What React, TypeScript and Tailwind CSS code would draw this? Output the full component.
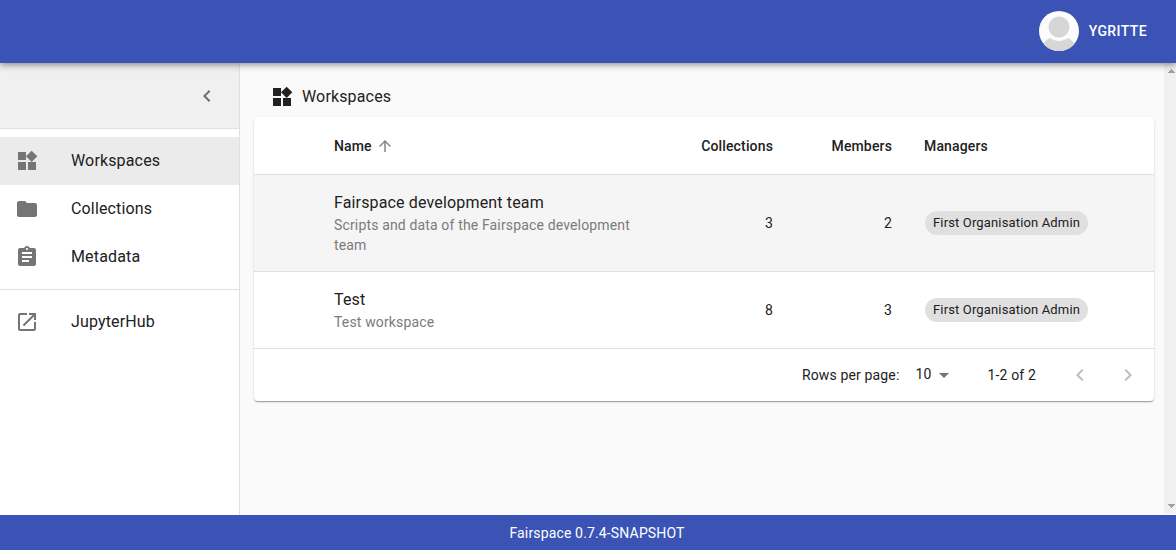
import React from 'react';

const ICONS = {
  widgets: 'M13 13v8h8v-8h-8zM3 21h8v-8H3v8zM3 3v8h8V3H3zm13.66-1.31L11 7.34 16.66 13l5.66-5.66-5.66-5.65z',
  folder: 'M10 4H4c-1.1 0-1.99.9-1.99 2L2 18c0 1.1.9 2 2 2h16c1.1 0 2-.9 2-2V8c0-1.1-.9-2-2-2h-8l-2-2z',
  assignment:
    'M19 3h-4.18C14.4 1.84 13.3 1 12 1c-1.3 0-2.4.84-2.82 2H5c-1.1 0-2 .9-2 2v14c0 1.1.9 2 2 2h14c1.1 0 2-.9 2-2V5c0-1.1-.9-2-2-2zm-7 0c.55 0 1 .45 1 1s-.45 1-1 1-1-.45-1-1 .45-1 1-1zm2 14H7v-2h7v2zm3-4H7v-2h10v2zm0-4H7V7h10v2z',
  openInNew:
    'M19 19H5V5h7V3H5c-1.11 0-2 .9-2 2v14c0 1.1.89 2 2 2h14c1.1 0 2-.9 2-2v-7h-2v7zM14 3v2h3.59l-9.83 9.83 1.41 1.41L19 6.41V10h2V3h-7z',
  left: 'M15.41 7.41L14 6l-6 6 6 6 1.41-1.41L10.83 12z',
  right: 'M10 6L8.59 7.41 13.17 12l-4.58 4.59L10 18l6-6z',
  arrowUp: 'M4 12l1.41 1.41L11 7.83V20h2V7.83l5.58 5.59L20 12l-8-8-8 8z',
  dropDown: 'M7 10l5 5 5-5z',
};

function Icon({ name, className = '' }: { name: keyof typeof ICONS; className?: string }) {
  return (
    <svg viewBox="0 0 24 24" fill="currentColor" className={`shrink-0 ${className}`} aria-hidden="true">
      <path d={ICONS[name]} />
    </svg>
  );
}

function NavItem({ icon, label, active = false }: { icon: keyof typeof ICONS; label: string; active?: boolean }) {
  return (
    <a className={`flex h-12 items-center pl-[15px] ${active ? 'bg-[#ebebeb]' : ''}`}>
      <Icon name={icon} className="size-6 text-[#757575]" />
      <span className="ml-8 text-base tracking-[0.00938em]">{label}</span>
    </a>
  );
}

const COLUMNS = 'grid grid-cols-[64px_349px_122px_119px_1fr] items-center border-b border-[#e0e0e0]';

const workspaces = [
  {
    name: 'Fairspace development team',
    description: 'Scripts and data of the Fairspace development team',
    collections: 3,
    members: 2,
    manager: 'First Organisation Admin',
    row: 'h-[97px] bg-[#f5f5f5]',
  },
  {
    name: 'Test',
    description: 'Test workspace',
    collections: 8,
    members: 3,
    manager: 'First Organisation Admin',
    row: 'h-[77px]',
  },
];

function Avatar() {
  return (
    <svg viewBox="0 0 40 40" className="size-10" aria-hidden="true">
      <defs>
        <clipPath id="avatar">
          <circle cx="20" cy="20" r="20" />
        </clipPath>
      </defs>
      <g clipPath="url(#avatar)">
        <rect width="40" height="40" fill="#fcfcfc" />
        <path d="M4 34C6 30 8 28 11 27c5 4 13 4 18 0 3 1 5 3 7 7v6H4z" fill="#d6d6d6" />
        <circle cx="20" cy="16" r="10.5" fill="#d6d6d6" />
      </g>
    </svg>
  );
}

export default function App() {
  return (
    <div className="flex h-[550px] w-full flex-col overflow-hidden bg-[#fafafa] font-['Roboto',sans-serif] text-[#212121]">
      <header className="relative z-10 flex h-[63px] shrink-0 items-center justify-end bg-[#3a53b5] pr-[29px] pb-px text-white shadow-[0_2px_4px_-1px_rgba(0,0,0,0.2),0_4px_5px_0_rgba(0,0,0,0.14),0_1px_10px_0_rgba(0,0,0,0.12)]">
        <Avatar />
        <span className="ml-2.5 text-sm font-medium tracking-[0.02857em]">YGRITTE</span>
      </header>

      <div className="flex min-h-0 flex-1">
        <aside className="w-60 shrink-0 border-r border-[#e0e0e0] bg-white">
          <div className="flex h-[66px] items-center justify-end border-b border-[#e0e0e0] bg-[#f0f0f0] pr-5">
            <Icon name="left" className="size-6 text-[#6c6c6c]" />
          </div>
          <nav className="py-2">
            <NavItem icon="widgets" label="Workspaces" active />
            <NavItem icon="folder" label="Collections" />
            <NavItem icon="assignment" label="Metadata" />
          </nav>
          <nav className="border-t border-[#e0e0e0] py-2">
            <NavItem icon="openInNew" label="JupyterHub" />
          </nav>
        </aside>

        <main className="min-w-0 flex-1 pr-2.5 pl-3.5">
          <div className="flex h-[54px] items-center pt-3.5 pl-4">
            <Icon name="widgets" className="size-6" />
            <h1 className="ml-2 text-base tracking-[0.00938em]">Workspaces</h1>
          </div>

          <section className="overflow-hidden rounded bg-white text-sm tracking-[0.01071em] shadow-[0_2px_1px_-1px_rgba(0,0,0,0.2),0_1px_1px_0_rgba(0,0,0,0.14),0_1px_3px_0_rgba(0,0,0,0.12)]">
            <div className={`${COLUMNS} h-[58px] font-medium`}>
              <span />
              <span className="flex items-center pl-4">
                Name
                <Icon name="arrowUp" className="ml-1 size-[18px] text-[#858585]" />
              </span>
              <span className="pr-4 text-right">Collections</span>
              <span className="pr-4 text-right">Members</span>
              <span className="pl-4">Managers</span>
            </div>

            {workspaces.map((w) => (
              <div key={w.name} className={`${COLUMNS} ${w.row}`}>
                <span />
                <div className="px-4">
                  <p className="text-base leading-6 tracking-[0.00938em]">{w.name}</p>
                  <p className="leading-5 text-[#7b7b7b]">{w.description}</p>
                </div>
                <span className="pr-4 text-right">{w.collections}</span>
                <span className="pr-4 text-right">{w.members}</span>
                <div className="pl-[17px]">
                  <span className="inline-flex h-6 items-center rounded-full bg-[#e0e0e0] px-2 text-[13px]">
                    {w.manager}
                  </span>
                </div>
              </div>
            ))}

            <footer className="flex h-[52px] items-center justify-end pr-3.5">
              <span>Rows per page:</span>
              <span className="ml-4 flex items-center pb-0.5">
                10
                <Icon name="dropDown" className="mt-0.5 size-6 text-[#757575]" />
              </span>
              <span className="ml-8">1-2 of 2</span>
              <Icon name="left" className="ml-8 size-6 text-[#bdbdbd]" />
              <Icon name="right" className="ml-6 size-6 text-[#bdbdbd]" />
            </footer>
          </section>
        </main>

        <div className="mb-px flex w-3 shrink-0 flex-col items-end justify-between bg-[#f0f0f0] py-1.5 pr-px">
          <svg viewBox="0 0 7 4" className="h-1 w-[7px]" fill="#a0a0a0" shapeRendering="crispEdges">
            <path d="M3 0h1v1h1v1h1v1h1v1H0V3h1V2h1V1h1z" />
          </svg>
          <svg viewBox="0 0 7 4" className="h-1 w-[7px]" fill="#a0a0a0" shapeRendering="crispEdges">
            <path d="M0 0h7v1H6v1H5v1H4v1H3V3H2V2H1V1H0z" />
          </svg>
        </div>
      </div>

      <footer className="flex h-[35px] shrink-0 items-center justify-center bg-[#3a53b5] pl-[18px] text-sm tracking-[0.01071em] text-white">
        Fairspace 0.7.4-SNAPSHOT
      </footer>
    </div>
  );
}
